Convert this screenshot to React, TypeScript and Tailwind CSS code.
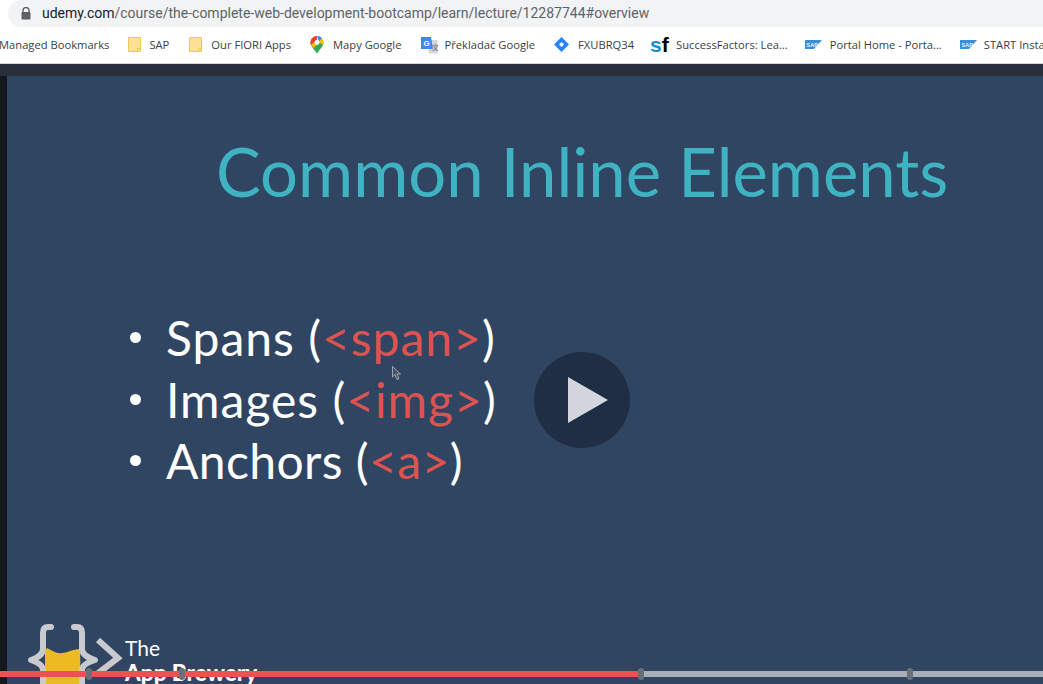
import React from 'react';

const FolderIcon = () => (
  <svg width="13" height="15" viewBox="0 0 13 15" className="shrink-0">
    <path d="M0.5 0.5H12.5V14.5H0.5Z" fill="#fde293" stroke="#f0c954" />
    <path d="M9.5 14.5V11.5H12.5" fill="none" stroke="#f0c954" />
  </svg>
);

const MapsIcon = () => (
  <svg width="14" height="18" viewBox="0 0 14 18" className="shrink-0">
    <path d="M7 18C5.5 14 0.5 11 0.5 6.5L7 6.5Z" fill="#34a853" />
    <path d="M7 18C8.5 14 13.5 11 13.5 6.5L7 6.5Z" fill="#34a853" />
    <path d="M2 2.2A6.5 6.5 0 0 1 7 0L7 4L3.5 7.5L0.9 9A6.5 6.5 0 0 1 2 2.2Z" fill="#ea4335" />
    <path d="M7 0A6.5 6.5 0 0 1 12 2.2L9 6Z" fill="#4285f4" />
    <path d="M12 2.2A6.5 6.5 0 0 1 13 9L9 6Z" fill="#fbbc04" />
    <path d="M0.9 9L4.5 6L9 6L4 12Z" fill="#fbbc04" />
    <circle cx="7" cy="6.5" r="2.4" fill="#fff" />
  </svg>
);

const TranslateIcon = () => (
  <svg width="17" height="17" viewBox="0 0 17 17" className="shrink-0">
    <path d="M6 3H16.5V16.5H8Z" fill="#d3d6da" />
    <path d="M0 0H10L12 12H0Z" fill="#4285f4" />
    <text x="2.5" y="9" fontSize="8" fontWeight="700" fill="#fff" fontFamily="Liberation Sans, sans-serif">G</text>
    <text x="11" y="13" fontSize="7" fontWeight="700" fill="#80868b" fontFamily="Noto Sans CJK JP, sans-serif">文</text>
  </svg>
);

const DiamondIcon = () => (
  <svg width="15" height="15" viewBox="0 0 15 15" className="shrink-0">
    <path d="M7.5 0L15 7.5L7.5 15L0 7.5Z" fill="#2684ff" />
    <path d="M7.5 5L10 7.5L7.5 10L5 7.5Z" fill="#fff" />
  </svg>
);

const SapIcon = () => (
  <svg width="17" height="9" viewBox="0 0 17 9" className="shrink-0">
    <path d="M0 0H17L9 9H0Z" fill="#3a8fd6" />
    <text x="1.5" y="6.5" fontSize="5.5" fontWeight="700" fill="#e8f2fb" fontFamily="Liberation Sans, sans-serif">SAP</text>
  </svg>
);

const bookmarks: { label: string; icon?: React.ReactNode; className: string }[] = [
  { label: 'Managed Bookmarks', className: '-ml-[1px]' },
  { label: 'SAP', icon: <FolderIcon />, className: 'ml-[19px] gap-[8px]' },
  { label: 'Our FIORI Apps', icon: <FolderIcon />, className: 'ml-[20px] gap-[9px]' },
  { label: 'Mapy Google', icon: <MapsIcon />, className: 'ml-[19px] gap-[9px]' },
  { label: 'Překladač Google', icon: <TranslateIcon />, className: 'ml-[20px] gap-[6px]' },
  { label: 'FXUBRQ34', icon: <DiamondIcon />, className: 'ml-[19px] gap-[9px]' },
  {
    label: 'SuccessFactors: Lea...',
    icon: (
      <span className="flex h-[18px] w-[16px] shrink-0 items-end font-['Liberation_Sans',sans-serif] text-[21px] leading-[18px] font-bold">
        <span className="text-[#0f8fd4]">s</span>
        <span className="text-black">f</span>
      </span>
    ),
    className: 'ml-[16px] gap-[10px]',
  },
  { label: 'Portal Home - Porta...', icon: <SapIcon />, className: 'ml-[17px] gap-[8px]' },
  { label: 'START Insta', icon: <SapIcon />, className: 'ml-[18px] gap-[7px]' },
];

const App: React.FC = () => {
  return (
    <div className="flex h-[684px] w-[1043px] flex-col overflow-hidden bg-white font-['Open_Sans',sans-serif]">
      {/* Address bar */}
      <div className="flex h-[27px] shrink-0 bg-white pl-2">
        <div className="flex h-[27px] flex-1 items-center rounded-l-[14px] bg-[#f1f3f4] pl-[13px]">
          <svg width="10" height="13" viewBox="0 0 10 13" className="shrink-0">
            <path d="M2 5.5V3.5A3 3 0 0 1 8 3.5V5.5" fill="none" stroke="#5f6368" strokeWidth="1.4" />
            <rect x="0.5" y="5" width="9" height="7.5" rx="1" fill="#5f6368" />
          </svg>
          <span className="ml-[11px] font-['Roboto',sans-serif] text-[14px] whitespace-nowrap text-[#5f6368]">
            <span className="text-[#202124]">udemy.com</span>
            /course/the-complete-web-development-bootcamp/learn/lecture/12287744#overview
          </span>
        </div>
      </div>

      {/* Bookmarks */}
      <div className="flex h-[37px] shrink-0 items-center overflow-hidden border-b border-[#d3d4d6] bg-white text-[11.2px] whitespace-nowrap text-[#3c4043]">
        {bookmarks.map(b => (
          <div key={b.label} className={`flex shrink-0 items-center ${b.className}`}>
            {b.icon}
            <span>{b.label}</span>
          </div>
        ))}
      </div>

      {/* Player */}
      <div className="relative flex min-h-0 flex-1 flex-col bg-[#292f3b]">
        <div className="h-3 shrink-0"></div>
        <div className="flex min-h-0 flex-1">
          <div className="w-[7px] shrink-0 bg-[#14181e]"></div>

          {/* Slide */}
          <div className="relative min-w-0 flex-1 overflow-hidden bg-[#304562] font-['Lato',sans-serif]">
            <h1 className="pt-[49px] pl-[209px] text-[67px] leading-[92px] font-normal whitespace-nowrap text-[#3fb3c2]">
              Common Inline Elements
            </h1>

            <ul className="mt-[90px] pl-[123px] text-[48px] leading-[61.5px] tracking-[1px] text-white">
              <li className="flex items-center gap-[25px]">
                <span className="h-[11px] w-[11px] rounded-full bg-white"></span>
                <span>
                  Spans (<span className="text-[#dc5350]">&lt;span&gt;</span>)
                </span>
              </li>
              <li className="flex items-center gap-[25px]">
                <span className="h-[11px] w-[11px] rounded-full bg-white"></span>
                <span>
                  Images (<span className="text-[#dc5350]">&lt;img&gt;</span>)
                </span>
              </li>
              <li className="flex items-center gap-[25px] tracking-[0.4px]">
                <span className="h-[11px] w-[11px] rounded-full bg-white"></span>
                <span>
                  Anchors (<span className="text-[#dc5350]">&lt;a&gt;</span>)
                </span>
              </li>
            </ul>

            {/* Logo */}
            <div className="absolute top-[548px] left-[20px] flex items-start">
              <svg width="98" height="70" viewBox="0 0 98 70">
                <path d="M18 30Q18 26 20 24C26 27 30 30 35 29C40 29 46 25 53 25L54 70H18Z" fill="#ecbb23" />
                <path d="M24 3H21Q16 3 16 9V25Q16 32 4 36Q16 40 16 46V70" fill="none" stroke="#c9cad0" strokeWidth="6" strokeLinecap="round" strokeLinejoin="round" />
                <path d="M47 3H50Q55 3 55 9V25Q55 32 68 36Q55 40 55 46V70" fill="none" stroke="#c9cad0" strokeWidth="6" strokeLinecap="round" strokeLinejoin="round" />
                <path d="M71 16L91 34L70 50" fill="none" stroke="#c9cad0" strokeWidth="6" />
              </svg>
              <div className="pt-[11px] text-[21px] leading-[25px] whitespace-nowrap text-white">
                <div>The</div>
                <div className="text-[22.5px] font-black">App Brewery</div>
              </div>
            </div>

            {/* Play button */}
            <div className="absolute top-[276px] left-[527px] flex h-24 w-24 items-center justify-center rounded-full bg-[#1f2e44]">
              <svg width="40" height="46" viewBox="0 0 40 46" className="ml-[12px]">
                <path d="M0 0L40 23L0 46Z" fill="#d3d6dc" />
              </svg>
            </div>

            {/* Cursor */}
            <svg width="10" height="15" viewBox="0 0 10 15" className="absolute top-[290px] left-[385px]">
              <path d="M0.5 0.5V11L3 8.6L5 13.5L7 12.6L5 8H8.5Z" fill="#4a5464" stroke="#c8ccd2" strokeWidth="0.7" />
            </svg>
          </div>
        </div>

        {/* Progress bar */}
        <div className="absolute top-[607px] right-0 left-0 h-[6px] bg-[#a9afb8]">
          <div className="h-full w-[640px] bg-[#ec5252]"></div>
          <div className="absolute -top-[3px] left-[86px] h-3 w-[6px] rounded-full bg-[#6a6f78]"></div>
          <div className="absolute -top-[3px] left-[179px] h-3 w-[6px] rounded-full bg-[#6a6f78]"></div>
          <div className="absolute -top-[3px] left-[638px] h-3 w-[6px] rounded-full bg-[#6a6f78]"></div>
          <div className="absolute -top-[3px] left-[907px] h-3 w-[6px] rounded-full bg-[#6a6f78]"></div>
        </div>
      </div>
    </div>
  );
};

export default App;
